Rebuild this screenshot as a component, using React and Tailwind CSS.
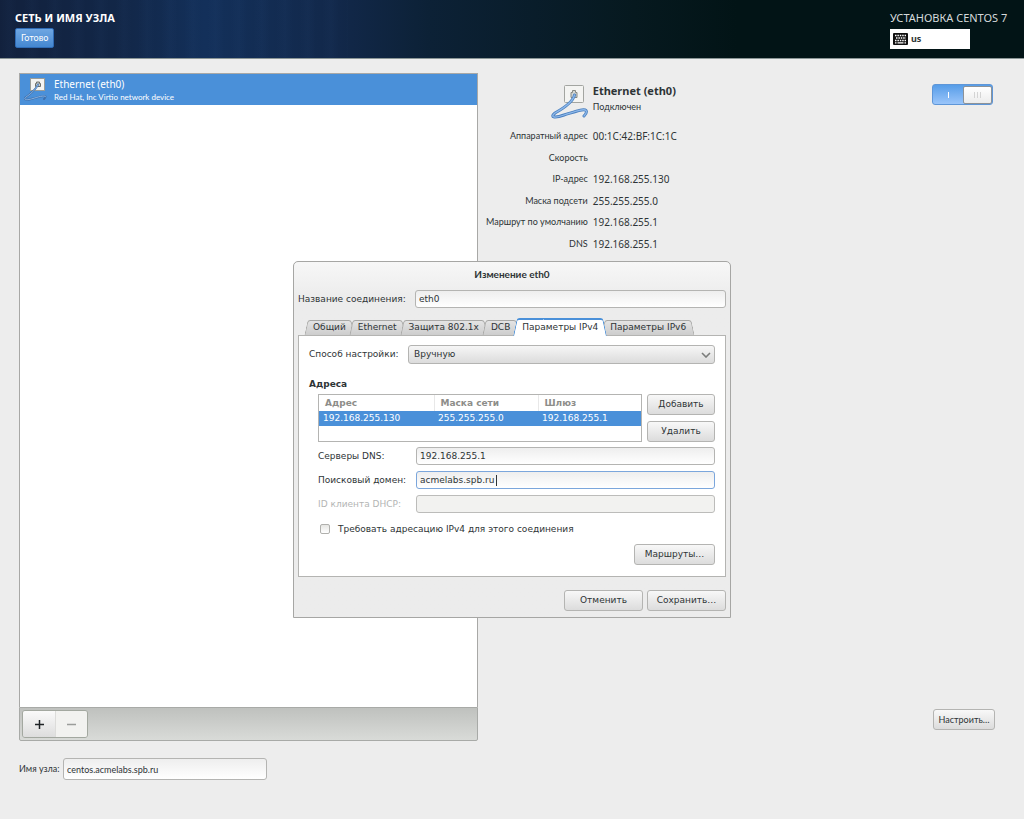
import { useState } from "react";
import clsx from "clsx";

const details = [
  { label: "Аппаратный адрес", value: "00:1C:42:BF:1C:1C" },
  { label: "Скорость", value: "" },
  { label: "IP-адрес", value: "192.168.255.130" },
  { label: "Маска подсети", value: "255.255.255.0" },
  { label: "Маршрут по умолчанию", value: "192.168.255.1" },
  { label: "DNS", value: "192.168.255.1" },
];

const tabs = ["Общий", "Ethernet", "Защита 802.1x", "DCB", "Параметры IPv4", "Параметры IPv6"];

function EthernetIcon({ className }) {
  return (
    <svg viewBox="0 0 38 37" className={className} fill="none" aria-hidden="true">
      <rect x="14.5" y="1.5" width="19" height="17" rx="1" fill="#f4f4f2" stroke="#a3a5a1" />
      <path d="M21 13.500V8.500h1.500v-2h3v2H27v5z" fill="#d5d7d3" stroke="#858884" />
      <g strokeLinecap="round" strokeLinejoin="round">
        <path
          d="M24.500 11C23 18 14 24 5 29C-1 34 6 34 14 31C24 28 34 24 36 26.500C37 28 36 30 34 32"
          stroke="#4a7fbe"
          strokeWidth="3"
        />
        <path
          d="M24.500 11C23 18 14 24 5 29C-1 34 6 34 14 31C24 28 34 24 36 26.500C37 28 36 30 34 32"
          stroke="#8db8ea"
          strokeWidth="1.300"
        />
      </g>
    </svg>
  );
}

function SmallEthernetIcon() {
  return (
    <svg viewBox="0 0 24 24" className="size-6" fill="none" aria-hidden="true">
      <rect x="7.500" y="0.500" width="14" height="12" fill="#f4f4f2" stroke="#9a9c98" />
      <path d="M12.500 8.500V5.500h1v-1.500h3v1.500h1v3z" fill="#c9cbc7" stroke="#6c6f6b" />
      <g strokeLinecap="round" strokeLinejoin="round">
        <path d="M15 6.500C13 12 7 16 2.500 19.500C0 22.500 5 22 10 20.500C15 19 21 17 22.500 18.500C22.500 19.500 22 20 21 21" stroke="#3d6fac" strokeWidth="2" />
        <path d="M15 6.500C13 12 7 16 2.500 19.500C0 22.500 5 22 10 20.500C15 19 21 17 22.500 18.500" stroke="#8fb7e4" strokeWidth="0.900" />
      </g>
    </svg>
  );
}

function KeyboardIcon() {
  return (
    <svg viewBox="0 0 15 12" className="h-3 w-[15px]" aria-hidden="true">
      <rect width="15" height="12" rx="1" fill="#111" />
      <path d="M2 2.5h11M3 5h10M2 7.5h11" stroke="#fff" strokeWidth="1.4" strokeDasharray="1.5 0.9" />
      <path d="M2 9.8h1.5M4.5 9.8h6M11.5 9.8H13" stroke="#fff" strokeWidth="1.3" />
    </svg>
  );
}

function Button({ children, className }) {
  return (
    <button
      type="button"
      className={clsx(
        "h-[21px] rounded-[3px] border border-[#b4b4b2] bg-linear-to-b from-[#f8f8f8] to-[#dcdcdc] whitespace-nowrap",
        className
      )}
    >
      {children}
    </button>
  );
}

function Tab({ label, active, onClick }) {
  return (
    <button
      type="button"
      role="tab"
      aria-selected={active}
      onClick={onClick}
      className={clsx(
        "relative -ml-1 px-2 whitespace-nowrap first:ml-0",
        "before:absolute before:inset-y-0 before:left-px before:right-1/3 before:-skew-x-12 before:rounded-tl-[3px] before:border-l before:border-t before:content-['']",
        "after:absolute after:inset-y-0 after:left-1/3 after:right-px after:skew-x-12 after:rounded-tr-[3px] after:border-r after:border-t after:content-['']",
        active
          ? "z-10 -mb-px h-[18px] before:border-t-2 before:border-[#4a90d9] before:bg-white after:border-t-2 after:border-[#4a90d9] after:bg-white"
          : "h-[15px] before:border-[#a8a8a6] before:bg-linear-to-b before:from-[#e4e4e4] before:to-[#cdcdcd] after:border-[#a8a8a6] after:bg-linear-to-b after:from-[#e4e4e4] after:to-[#cdcdcd]"
      )}
    >
      <span className="relative z-10">{label}</span>
    </button>
  );
}

function Field({ id, label, value, focused, disabled }) {
  return (
    <div className="flex items-center">
      <label htmlFor={id} className={clsx("w-[98px] shrink-0 whitespace-nowrap", disabled && "text-[#b3b5b4]")}>
        {label}
      </label>
      <div className="relative flex-1">
        <input
          id={id}
          type="text"
          defaultValue={value}
          disabled={disabled}
          className={clsx(
            "block h-[18px] w-full rounded-[3px] border px-[3px] outline-none",
            disabled && "border-[#bcbcba] bg-[#f2f2f0]",
            focused && "border-[#7ba6dc] bg-linear-to-b from-[#eeeeee] to-white",
            !disabled && !focused && "border-[#b4b4b2] bg-linear-to-b from-[#eeeeee] to-white"
          )}
        />
        {focused && <span className="absolute top-1 left-20 h-[11px] w-px bg-[#2e3436]" />}
      </div>
    </div>
  );
}

function EditDialog() {
  const [tab, setTab] = useState("Параметры IPv4");

  return (
    <div
      role="dialog"
      aria-labelledby="dialog-title"
      className="w-[438px] rounded-t-[5px] border border-[#a6a6a4] bg-[#ececec] bg-linear-to-b from-[#f7f7f7] from-0% to-[#ececec] to-10% px-1 pb-[6px] font-['DejaVu_Sans',sans-serif] text-[9px] leading-3"
    >
      <h2
        id="dialog-title"
        className="pt-[6px] text-center font-[Lato,'Noto_Sans',sans-serif] text-[10px] font-bold leading-3"
      >
        Изменение eth0
      </h2>

      <div className="mt-[10px] flex items-center">
        <label htmlFor="conn-name" className="w-[117px] shrink-0 whitespace-nowrap">
          Название соединения:
        </label>
        <input
          id="conn-name"
          type="text"
          defaultValue="eth0"
          className="h-[18px] min-w-0 flex-1 rounded-[3px] border border-[#b4b4b2] bg-linear-to-b from-[#eeeeee] to-white px-[3px] outline-none"
        />
      </div>

      {/* Tabs */}
      <div role="tablist" className="mt-[9px] flex h-[18px] items-end pl-[7px]">
        {tabs.map((name) => (
          <Tab key={name} label={name} active={tab === name} onClick={() => setTab(name)} />
        ))}
      </div>

      <div role="tabpanel" className="border border-[#b4b4b2] bg-white px-[10px] pt-[9px] pb-[11px]">
        <div className="flex items-center">
          <label htmlFor="method" className="w-[99px] shrink-0 whitespace-nowrap">
            Способ настройки:
          </label>
          <div className="relative flex-1">
            <select
              id="method"
              className="block h-[19px] w-full appearance-none rounded-[3px] border border-[#b4b4b2] bg-linear-to-b from-[#f6f6f6] to-[#dcdcdc] px-[5px]"
            >
              <option>Вручную</option>
              <option>Автоматически (DHCP)</option>
            </select>
            <svg viewBox="0 0 10 6" className="pointer-events-none absolute top-[7px] right-1 h-[6px] w-[10px]" fill="none">
              <path d="M1 1l4 4 4-4" stroke="#7b7d7b" strokeWidth="1.6" />
            </svg>
          </div>
        </div>

        <h3 className="mt-[14px] font-bold">Адреса</h3>

        <div className="mt-1 flex gap-[5px] pl-[9px]">
          <div className="h-12 flex-1 border border-[#b4b4b2] bg-white">
            <table className="w-full table-fixed border-collapse text-left">
              <thead>
                <tr className="h-4 text-[#8d8d89]">
                  <th className="w-[115px] px-[6px] py-0">Адрес</th>
                  <th className="w-[104px] border-l border-[#e8e8e8] px-[6px] py-0">Маска сети</th>
                  <th className="border-l border-[#e8e8e8] px-[6px] py-0">Шлюз</th>
                </tr>
              </thead>
              <tbody>
                <tr className="h-[15px] bg-[#4a90d9] text-white">
                  <td className="px-1 py-0">192.168.255.130</td>
                  <td className="px-1 py-0">255.255.255.0</td>
                  <td className="px-1 py-0">192.168.255.1</td>
                </tr>
              </tbody>
            </table>
          </div>
          <div className="flex w-[68px] flex-col justify-between">
            <Button>Добавить</Button>
            <Button>Удалить</Button>
          </div>
        </div>

        <div className="mt-[5px] flex flex-col gap-[6px] pl-[9px]">
          <Field id="dns" label="Серверы DNS:" value="192.168.255.1" />
          <Field id="search-domain" label="Поисковый домен:" value="acmelabs.spb.ru" focused />
          <Field id="dhcp-id" label="ID клиента DHCP:" value="" disabled />
        </div>

        <div className="mt-[10px] flex items-center gap-2 pl-[11px]">
          <input
            id="require-ipv4"
            type="checkbox"
            className="size-[10px] appearance-none rounded-[2px] border border-[#b0b0ad] bg-linear-to-b from-[#e6e6e3] to-white checked:bg-[#4a90d9]"
          />
          <label htmlFor="require-ipv4">Требовать адресацию IPv4 для этого соединения</label>
        </div>

        <div className="mt-[9px] flex justify-end">
          <Button className="w-[81px]">Маршруты…</Button>
        </div>
      </div>

      <div className="mt-[13px] flex justify-end gap-1">
        <Button className="w-[79px]">Отменить</Button>
        <Button className="w-[79px]">Сохранить…</Button>
      </div>
    </div>
  );
}

export default function App() {
  const [enabled, setEnabled] = useState(true);

  return (
    <div className="flex min-h-screen flex-col bg-[#ededed] font-[Lato,'Noto_Sans',sans-serif] text-[10px] leading-3 text-[#2e3436]">
      {/* Top bar */}
      <header className="border-b border-[#8b9696] bg-[linear-gradient(90deg,#12213d_0%,#122748_12%,#13305a_20%,#12284a_33%,#0c2136_42%,#06191f_62%,#021416_72%)] text-white">
        <div className="flex h-[58px] items-start justify-between bg-[repeating-linear-gradient(90deg,transparent_0px,rgba(90,140,210,0.03)_9px,transparent_17px,transparent_23px)] px-[15px] pt-[10px] [background-size:34%_100%] bg-no-repeat">
          <div>
            <h1 className="font-['Noto_Sans',sans-serif] text-[11px] font-bold leading-4">СЕТЬ И ИМЯ УЗЛА</h1>
            <button
              type="button"
              className="mt-[2px] block h-5 rounded-[2px] border border-[#2f6bb5] bg-linear-to-b from-[#6ea6e2] to-[#4487d0] px-[5px] text-[9px]"
            >
              Готово
            </button>
          </div>
          <div className="w-[119px] font-['Noto_Sans',sans-serif]">
            <p className="text-[11px] leading-4 text-[#d5dadb]">УСТАНОВКА CENTOS 7</p>
            <button
              type="button"
              className="mt-[3px] flex h-5 w-20 items-center gap-[3px] bg-white pl-[3px] text-[9px] font-bold text-[#2e3436]"
            >
              <KeyboardIcon />
              us
            </button>
          </div>
        </div>
      </header>

      <main className="relative flex flex-1 flex-col pt-[14px] pr-[29px] pb-[39px] pl-[19px]">
        <div className="flex flex-1">
          {/* Device list */}
          <section className="flex w-[47%] flex-col">
            <ul className="flex-1 border border-b-0 border-[#a8a8a6] bg-white">
              <li className="flex h-[31px] items-center gap-[7px] bg-[#4a90d9] pl-[3px] text-white">
                <SmallEthernetIcon />
                <div className="pt-[2px]">
                  <p className="font-['Noto_Sans',sans-serif] text-[10px] leading-[13px]">Ethernet (eth0)</p>
                  <p className="text-[8px] leading-3">Red Hat, Inc Virtio network device</p>
                </div>
              </li>
            </ul>
            <div className="flex h-[34px] items-start rounded-b-[2px] border border-[#a8aaa7] bg-linear-to-b from-[#bfc1be] to-[#d9dbd8] pt-[2px] pl-[2px]">
              <div className="flex h-7 overflow-hidden rounded-[3px] border border-[#a3a8a0]">
                <button
                  type="button"
                  aria-label="Добавить устройство"
                  className="flex w-8 items-center justify-center bg-linear-to-b from-[#fafafa] to-[#dddddd]"
                >
                  <svg viewBox="0 0 9 9" className="size-[9px]">
                    <path d="M4.5 0v9M0 4.5h9" stroke="#1e2325" strokeWidth="1.5" />
                  </svg>
                </button>
                <button
                  type="button"
                  aria-label="Удалить устройство"
                  disabled
                  className="flex w-8 items-center justify-center border-l border-[#dcdcda] bg-[#f2f2f0]"
                >
                  <svg viewBox="0 0 9 9" className="size-[9px]">
                    <path d="M0 4.5h9" stroke="#9b9d9a" strokeWidth="1.4" />
                  </svg>
                </button>
              </div>
            </div>
          </section>

          {/* Device details */}
          <section className="flex flex-1 flex-col justify-between pt-[11px] pb-[11px] pl-2">
            <div>
              <div className="flex items-start">
                <div className="flex w-[102px] shrink-0 justify-end">
                  <EthernetIcon className="h-[37px] w-[38px]" />
                </div>
                <div className="ml-[5px] flex-1">
                  <h2 className="font-['Noto_Sans',sans-serif] text-[11px] font-bold leading-[14px]">Ethernet (eth0)</h2>
                  <p className="mt-[3px] text-[9px] leading-3">Подключен</p>
                </div>
                <label className="mr-[2px] flex h-[21px] w-[61px] cursor-pointer items-center rounded-[3px] border border-[#5e96d8] bg-linear-to-b from-[#569de8] to-[#9ac5fa]">
                  <input
                    type="checkbox"
                    role="switch"
                    aria-label="Ethernet (eth0)"
                    checked={enabled}
                    onChange={(e) => setEnabled(e.target.checked)}
                    className="sr-only"
                  />
                  <span className="flex flex-1 justify-center">
                    <span className="h-[6px] w-px bg-white" />
                  </span>
                  <span className="flex h-[18px] w-[29px] items-center justify-center gap-[2px] rounded-[2px] border border-[#8c9298] bg-linear-to-b from-white to-[#ececec]">
                    <span className="h-[6px] w-px bg-[#d4d4d4]" />
                    <span className="h-[6px] w-px bg-[#d4d4d4]" />
                    <span className="h-[6px] w-px bg-[#d4d4d4]" />
                  </span>
                </label>
              </div>

              <dl className="mt-[9px] grid h-[120px] grid-cols-[102px_1fr] content-between gap-x-[5px]">
                {details.map((row) => (
                  <div key={row.label} className="contents">
                    <dt className="text-right text-[9px] leading-3 whitespace-nowrap">{row.label}</dt>
                    <dd className="font-['Noto_Sans',sans-serif] text-[10px] leading-3">{row.value}</dd>
                  </div>
                ))}
              </dl>
            </div>

            <Button className="w-[62px] self-end text-[9px]">Настроить…</Button>
          </section>
        </div>

        {/* Host name */}
        <div className="mt-[17px] flex items-center gap-1 text-[9px]">
          <label htmlFor="hostname" className="w-10 whitespace-nowrap">
            Имя узла:
          </label>
          <input
            id="hostname"
            type="text"
            defaultValue="centos.acmelabs.spb.ru"
            className="h-[22px] w-[204px] rounded-[3px] border border-[#b4b4b2] bg-linear-to-b from-[#eeeeee] to-white px-[3px] outline-none"
          />
        </div>

        <div className="absolute inset-0 flex items-center justify-center">
          <EditDialog />
        </div>
      </main>
    </div>
  );
}
